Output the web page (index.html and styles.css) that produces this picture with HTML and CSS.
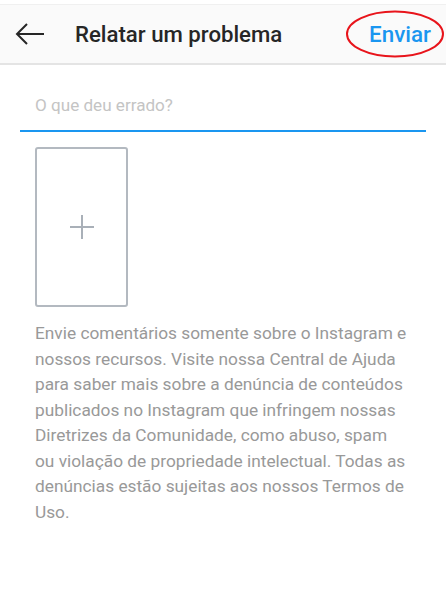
FILE: index.html
```html
<!DOCTYPE html>
<html>
<head>
	<title>Relatar um problema</title>
	<meta charset="utf-8">
	<link rel="stylesheet" href="styles.css">
</head>
<body>
	<div class="top-bar">
		<a href="#" class="back">
			<svg width="30" height="22" viewBox="0 0 30 22">
				<path d="M29 11H2M12 1L2 11l10 10" fill="none" stroke="#262626" stroke-width="2"/>
			</svg>
		</a>
		<span class="title">Relatar um problema</span>
		<a href="#" class="send">Enviar
			<svg class="circle" width="100" height="48" viewBox="0 0 100 48">
				<ellipse cx="49" cy="24" rx="48" ry="22.5" fill="none" stroke="#e8141b" stroke-width="2"/>
			</svg>
		</a>
	</div>
	<div class="content">
		<div class="field">O que deu errado?</div>
		<div class="upload">
			<svg width="26" height="26" viewBox="0 0 26 26">
				<path d="M13 1v24M1 13h24" stroke="#a9b0b8" stroke-width="2"/>
			</svg>
		</div>
		<p class="note">Envie comentários somente sobre o Instagram e nossos recursos. Visite nossa Central de Ajuda para saber mais sobre a denúncia de conteúdos publicados no Instagram que infringem nossas Diretrizes da Comunidade, como abuso, spam<br>ou violação de propriedade intelectual. Todas as denúncias estão sujeitas aos nossos Termos de Uso.</p>
	</div>
</body>
</html>
```
FILE: styles.css
```css
body{
	margin: 0;
	background: #fff;
	font-family: Roboto, "Liberation Sans", sans-serif;
}
.top-bar{
	display: flex;
	align-items: center;
	height: 58px;
	margin-top: 4px;
	background: #fafafa;
	border-top: 1px solid #f0f0f0;
	border-bottom: 2px solid #e4e4e4;
	padding: 0 15px;
}
.back{
	display: flex;
	width: 30px;
}
.title{
	margin-left: 30px;
	font-size: 22.2px;
	font-weight: 500;
	color: #262626;
	flex: 1;
}
.send{
	position: relative;
	font-size: 22.4px;
	font-weight: 500;
	color: #1a96f0;
	text-decoration: none;
}
.circle{
	position: absolute;
	left: -23px;
	top: -11px;
}
.content{
	padding: 0 20px;
}
.field{
	margin-top: 30px;
	padding: 0 15px 15px;
	font-size: 17.1px;
	color: #c4c4c4;
	border-bottom: 2px solid #1a96f0;
}
.upload{
	margin: 15px 0 0 15px;
	width: 89px;
	height: 156px;
	border: 2px solid #b3b9c0;
	border-radius: 3px;
	display: flex;
	align-items: center;
	justify-content: center;
}
.note{
	margin: 14px 0 0 15px;
	padding-right: 15px;
	font-size: 17.3px;
	line-height: 25.5px;
	color: #999;
}
```
